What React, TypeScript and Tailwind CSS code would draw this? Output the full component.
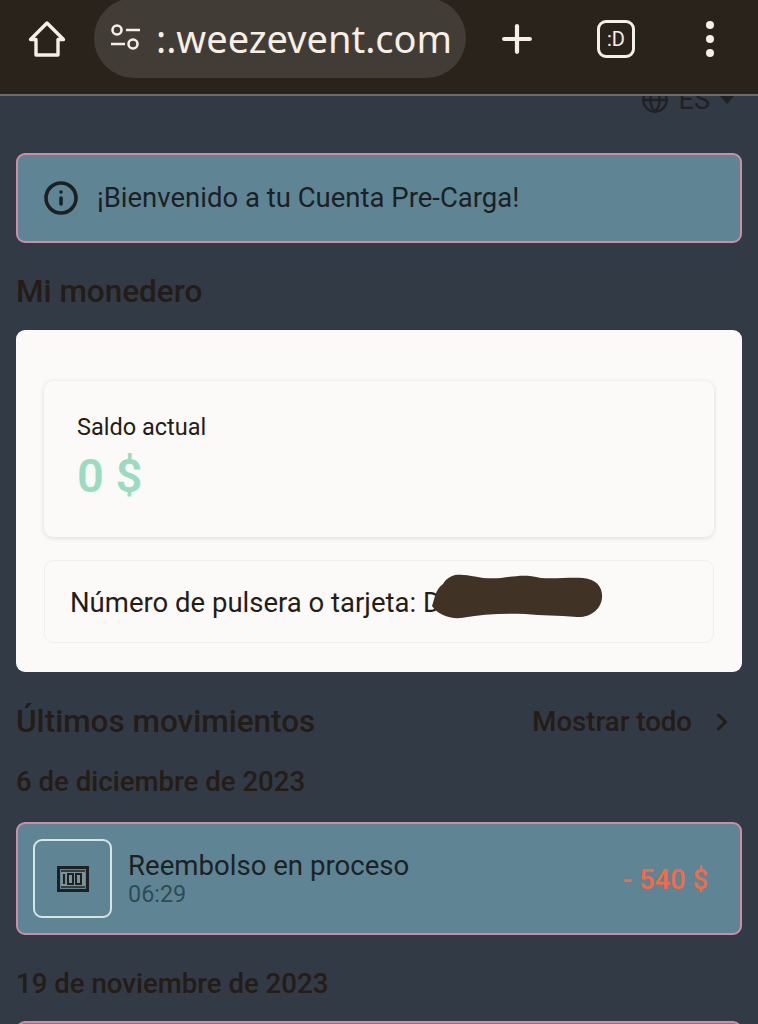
import { Plus, Globe, ChevronRight, Info } from "lucide-react";

function Movement() {
  return (
    <div className="flex h-[113px] items-center rounded-[9px] border-2 border-[#cf8ca6] bg-[#5f8594] pl-[15px] pr-[32px]">
      <div className="flex h-[79px] w-[79px] items-center justify-center rounded-[9px] border-2 border-[#d9e4e6]">
        <svg width="32" height="26" viewBox="0 0 32 26" fill="none">
          <rect x="1.5" y="1.5" width="29" height="23" stroke="#1d2122" strokeWidth="3" />
          <rect x="4" y="4" width="24" height="18" fill="#7d949b" />
          <path d="M4 5h24M4 21h24" stroke="#1d2122" strokeWidth="1.5" />
          <path d="M7 8v10" stroke="#1d2122" strokeWidth="2.2" />
          <rect x="11" y="8" width="5" height="10" stroke="#1d2122" strokeWidth="2" />
          <rect x="19" y="8" width="5" height="10" stroke="#1d2122" strokeWidth="2" />
        </svg>
      </div>
      <div className="ml-[16px] flex flex-col">
        <span className="text-[27.6px] leading-[30px] text-[#1c2224]">Reembolso en proceso</span>
        <span className="text-[23.4px] leading-[26px] text-[#2f4b57]">06:29</span>
      </div>
      <span className="ml-auto mt-[3px] text-[27.4px] font-medium text-[#f26b45]">- 540 $</span>
    </div>
  );
}

export default function App() {
  return (
    <div className="h-[1024px] w-[758px] overflow-hidden bg-[#323a45] font-['Roboto',sans-serif]">
      <header className="flex h-[96px] border-b-2 border-[#6a6a68] bg-[#2a231c] text-[#f7efe6]">
        <div className="flex w-[94px] items-center justify-center pb-[17px]">
          <svg width="38" height="38" viewBox="0 0 38 38" fill="none" stroke="currentColor" strokeWidth="3.4" strokeLinejoin="round">
            <path d="M19 3L35.5 19.5H30V35H8V19.5H2.5Z" />
          </svg>
        </div>
        <div className="-mt-[2px] flex h-[80px] w-[372px] items-center rounded-[40px] bg-[#423c37] pl-[15px]">
          <svg width="32" height="30" viewBox="0 0 32 30" fill="none" stroke="currentColor" strokeWidth="2.6">
            <circle cx="8" cy="7" r="4.5" />
            <path d="M17 7h14M2 21h14" />
            <circle cx="24" cy="21" r="4.5" />
          </svg>
          <span className="ml-[15px] font-['Noto_Sans',sans-serif] text-[38px] leading-none">:.weezevent.com</span>
        </div>
        <div className="flex w-[102px] items-center justify-center pb-[17px]">
          <Plus size={44} strokeWidth={2.3} />
        </div>
        <div className="flex w-[96px] items-center justify-center pb-[17px]">
          <div className="flex h-[38px] w-[38px] items-center justify-center rounded-[9px] border-[3px] border-[#f7efe6] text-[20px] leading-none">
            :D
          </div>
        </div>
        <div className="flex flex-1 flex-col items-center justify-center gap-[6px] pb-[17px] pr-[2px]">
          <span className="h-[8px] w-[8px] rounded-full bg-[#f7efe6]" />
          <span className="h-[8px] w-[8px] rounded-full bg-[#f7efe6]" />
          <span className="h-[8px] w-[8px] rounded-full bg-[#f7efe6]" />
        </div>
      </header>

      <main className="overflow-hidden px-[16px] text-[#241c16]">
        <div className="-mt-[11px] flex h-[30px] items-center justify-end gap-[10px] pr-[8px] text-[27px] text-[#1f2126]">
          <Globe size={28} strokeWidth={2} />
          <span>ES</span>
          <span className="h-0 w-0 border-x-[7px] border-t-[8px] border-x-transparent border-t-[#1f2126]" />
        </div>

        <div className="mt-[38px] flex h-[90px] items-center rounded-[9px] border-2 border-[#cf8ca6] bg-[#5f8594] pl-[26px] text-[27.5px] text-[#1b2123]">
          <Info size={36} strokeWidth={2.4} className="-ml-[1px]" />
          <span className="ml-[18px]">¡Bienvenido a tu Cuenta Pre-Carga!</span>
        </div>

        <h2 className="mt-[31px] text-[31.5px] font-medium leading-[36px]">Mi monedero</h2>

        <section className="mt-[20px] h-[342px] rounded-[9px] bg-[#fbfaf9] px-[28px] pt-[51px]">
          <div className="flex h-[156px] flex-col rounded-[9px] bg-[#fbfaf9] pl-[33px] pt-[31px] shadow-[0_1px_5px_rgba(40,30,20,0.14)]">
            <span className="text-[23.5px] leading-[30px]">Saldo actual</span>
            <span className="mt-[8px] text-[47px] font-semibold leading-[52px] text-[#9bdcc0]">0 $</span>
          </div>
          <div className="relative mt-[23px] flex h-[83px] items-center rounded-[9px] border border-[#f1efed] pl-[25px] pt-[2px] text-[27.5px]">
            <span>Número de pulsera o tarjeta: D</span>
            <svg className="absolute left-[386px] top-[11px]" width="176" height="48" viewBox="0 0 176 48">
              <path
                d="M24 3C38 1 48 8 70 6C86 4 94 2 110 6C124 7 140 5 152 6C166 7 172 16 171 26C170 38 158 46 146 45C126 43 112 44 94 42C74 41 50 42 30 46C18 47 6 42 1 34C4 26 4 18 12 12C15 7 18 5 24 3Z"
                fill="#403326"
              />
            </svg>
          </div>
        </section>

        <div className="mt-[29px] flex items-center justify-between">
          <h2 className="text-[31.5px] font-medium leading-[36px]">Últimos movimientos</h2>
          <div className="flex items-center text-[27.6px] font-medium">
            <span>Mostrar todo</span>
            <ChevronRight className="ml-[16px] mr-[6px]" size={28} strokeWidth={2.6} />
          </div>
        </div>

        <h3 className="mt-[24px] text-[27.6px] font-medium leading-[32px]">6 de diciembre de 2023</h3>

        <div className="mt-[24px]">
          <Movement />
        </div>

        <h3 className="mt-[33px] text-[27.6px] font-medium leading-[32px]">19 de noviembre de 2023</h3>

        <div className="mt-[21px] h-[60px] rounded-[9px] border-2 border-[#cf8ca6] bg-[#5f8594]" />
      </main>
    </div>
  );
}
